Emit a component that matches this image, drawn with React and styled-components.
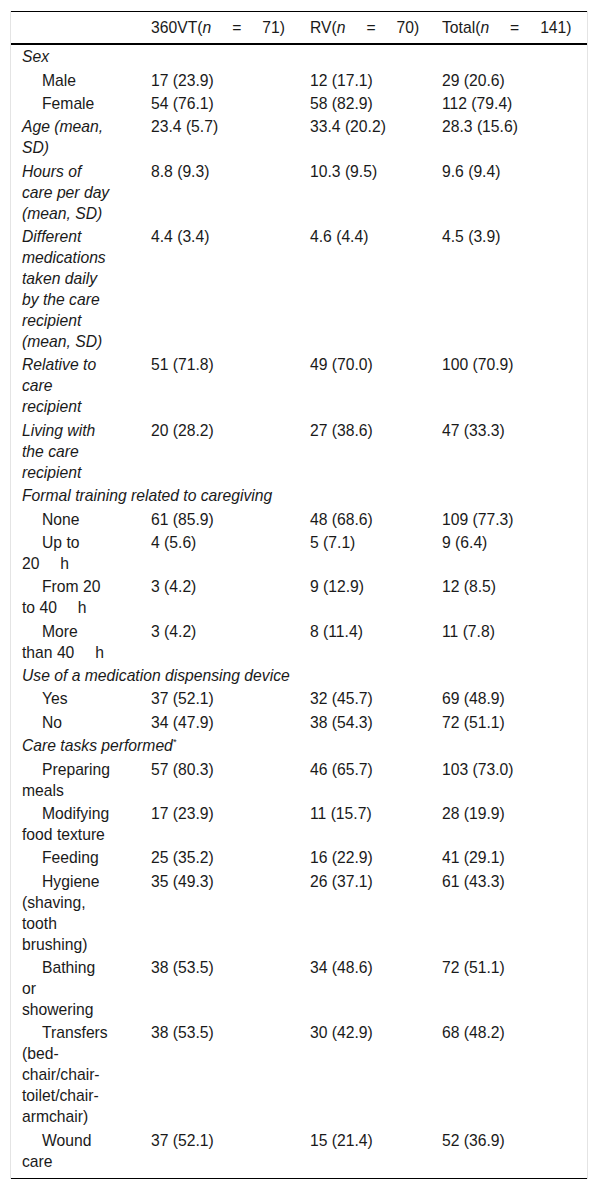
import styled, { createGlobalStyle } from 'styled-components';

const GlobalStyle = createGlobalStyle`
  body {
    margin: 0;
    background: #fff;
    font-family: "Liberation Sans", Arial, sans-serif;
    color: #1a1a1a;
  }
`;

// wide spacing used around "=" and before units
const NSP = '\u2003\u2004';

// rows of the table; kind: group (italic, spans all), stat (italic label), item (indented)
const rows = [
  { kind: 'group', label: 'Sex', span: false },
  { kind: 'item', label: 'Male', values: ['17 (23.9)', '12 (17.1)', '29 (20.6)'] },
  { kind: 'item', label: 'Female', values: ['54 (76.1)', '58 (82.9)', '112 (79.4)'] },
  { kind: 'stat', label: 'Age (mean, SD)', values: ['23.4 (5.7)', '33.4 (20.2)', '28.3 (15.6)'] },
  { kind: 'stat', label: 'Hours of care per day (mean, SD)', values: ['8.8 (9.3)', '10.3 (9.5)', '9.6 (9.4)'] },
  {
    kind: 'stat',
    label: 'Different medications taken daily by the care recipient (mean, SD)',
    values: ['4.4 (3.4)', '4.6 (4.4)', '4.5 (3.9)'],
  },
  { kind: 'stat', label: 'Relative to care recipient', values: ['51 (71.8)', '49 (70.0)', '100 (70.9)'] },
  { kind: 'stat', label: 'Living with the care recipient', values: ['20 (28.2)', '27 (38.6)', '47 (33.3)'] },
  { kind: 'group', label: 'Formal training related to caregiving', span: true },
  { kind: 'item', label: 'None', values: ['61 (85.9)', '48 (68.6)', '109 (77.3)'] },
  { kind: 'item', label: `Up to 20${NSP}h`, values: ['4 (5.6)', '5 (7.1)', '9 (6.4)'] },
  { kind: 'item', label: `From 20 to 40${NSP}h`, values: ['3 (4.2)', '9 (12.9)', '12 (8.5)'] },
  { kind: 'item', label: `More than 40${NSP}h`, values: ['3 (4.2)', '8 (11.4)', '11 (7.8)'] },
  { kind: 'group', label: 'Use of a medication dispensing device', span: true },
  { kind: 'item', label: 'Yes', values: ['37 (52.1)', '32 (45.7)', '69 (48.9)'] },
  { kind: 'item', label: 'No', values: ['34 (47.9)', '38 (54.3)', '72 (51.1)'] },
  { kind: 'group', label: 'Care tasks performed', mark: '*', span: true },
  { kind: 'item', label: 'Preparing meals', values: ['57 (80.3)', '46 (65.7)', '103 (73.0)'] },
  { kind: 'item', label: 'Modifying food texture', values: ['17 (23.9)', '11 (15.7)', '28 (19.9)'] },
  { kind: 'item', label: 'Feeding', values: ['25 (35.2)', '16 (22.9)', '41 (29.1)'] },
  { kind: 'item', label: 'Hygiene (shaving, tooth brushing)', values: ['35 (49.3)', '26 (37.1)', '61 (43.3)'] },
  { kind: 'item', label: 'Bathing or showering', values: ['38 (53.5)', '34 (48.6)', '72 (51.1)'] },
  {
    kind: 'item',
    label: 'Transfers (bed-chair/chair-toilet/chair-armchair)',
    values: ['38 (53.5)', '30 (42.9)', '68 (48.2)'],
  },
  { kind: 'item', label: 'Wound care', values: ['37 (52.1)', '15 (21.4)', '52 (36.9)'] },
];

const headers = [
  { name: '360VT', n: '71' },
  { name: 'RV', n: '70' },
  { name: 'Total', n: '141' },
];

const App = () => {
  return (
    <>
      <GlobalStyle />
      <Page>
        <Frame>
          <Table>
            <colgroup>
              <col style={{ width: 129 }} />
              <col style={{ width: 159 }} />
              <col style={{ width: 132 }} />
              <col style={{ width: 156 }} />
            </colgroup>
            <thead>
              <tr>
                <HeadCell />
                {headers.map(h => (
                  <HeadCell key={h.name}>
                    {h.name}(<i>n</i>
                    {NSP}={NSP}
                    {h.n})
                  </HeadCell>
                ))}
              </tr>
            </thead>
            <tbody>
              {rows.map((row, i) => {
                if (row.kind === 'group') {
                  return (
                    <tr key={i}>
                      {row.span ? (
                        <LabelCell $italic colSpan={4}>
                          {row.label}
                          {row.mark && <Mark>{row.mark}</Mark>}
                        </LabelCell>
                      ) : (
                        <>
                          <LabelCell $italic>{row.label}</LabelCell>
                          <Cell />
                          <Cell />
                          <Cell />
                        </>
                      )}
                    </tr>
                  );
                }
                return (
                  <tr key={i}>
                    <LabelCell $italic={row.kind === 'stat'} $indent={row.kind === 'item'}>
                      {row.label}
                    </LabelCell>
                    {row.values.map((v, j) => (
                      <Cell key={j}>{v}</Cell>
                    ))}
                  </tr>
                );
              })}
            </tbody>
          </Table>
        </Frame>
      </Page>
    </>
  );
};

export default App;

const Page = styled.div`
  padding: 11px 10px 11px;
`;

const Frame = styled.div`
  border-left: 1px solid #e4e4e4;
  border-right: 1px solid #e4e4e4;
`;

const Table = styled.table`
  width: 100%;
  table-layout: fixed;
  border-collapse: collapse;
  font-size: 15.7px;
  line-height: 21px;
  border-top: 1px solid #000;
  border-bottom: 1px solid #000;

  thead tr {
    border-bottom: 2px solid #000;
  }

  tbody tr:last-child td {
    padding-bottom: 6px;
  }
`;

const HeadCell = styled.th`
  font-weight: normal;
  text-align: left;
  vertical-align: top;
  padding: 5px 0 5px 11px;
  white-space: nowrap;

  i {
    font-style: italic;
  }
`;

const Cell = styled.td`
  vertical-align: top;
  padding: 1.2px 0 1.2px 11px;
`;

const LabelCell = styled(Cell)`
  padding-right: ${p => (p.colSpan ? '0' : '29px')};
  font-style: ${p => (p.$italic ? 'italic' : 'normal')};
  text-indent: ${p => (p.$indent ? '20px' : '0')};
`;

const Mark = styled.sup`
  font-size: 9px;
  line-height: 0;
  font-style: italic;
`;
